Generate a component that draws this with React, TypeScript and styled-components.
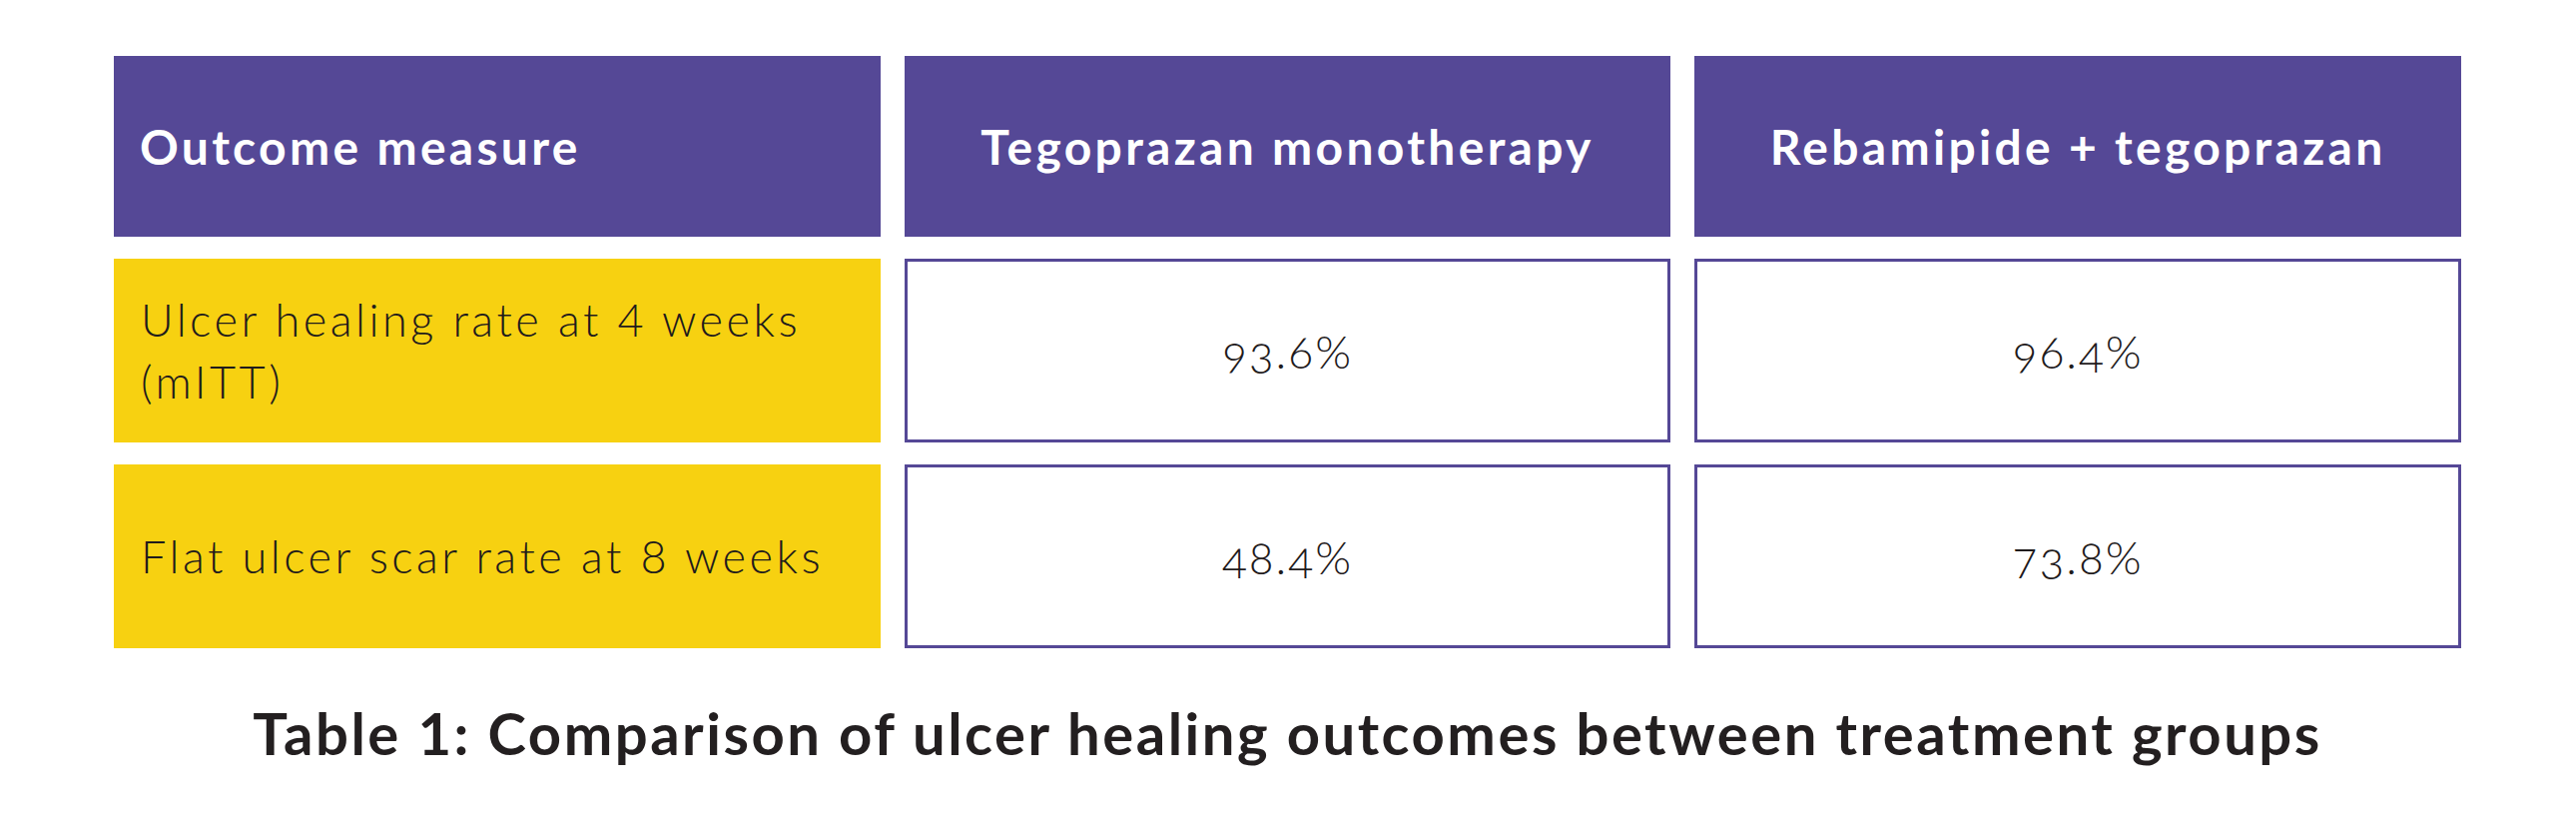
import styled, { createGlobalStyle } from 'styled-components';

const GlobalStyle = createGlobalStyle`
  html, body {
    margin: 0;
    padding: 0;
    background: #ffffff;
  }
  body {
    font-family: Lato, "Noto Sans", sans-serif;
    color: #231f20;
  }
`;

const rows = [
  { measure: 'Ulcer healing rate at 4 weeks (mITT)', mono: '93.6%', combo: '96.4%' },
  { measure: 'Flat ulcer scar rate at 8 weeks', mono: '48.4%', combo: '73.8%' },
];

function App() {
  return (
    <>
      <GlobalStyle />
      <Page>
        <Grid>
          <HeadCell>Outcome measure</HeadCell>
          <HeadCell $center>Tegoprazan monotherapy</HeadCell>
          <HeadCell $center>Rebamipide + tegoprazan</HeadCell>
          {rows.map((row) => (
            <Row key={row.measure}>
              <MeasureCell>{row.measure}</MeasureCell>
              <ValueCell>{row.mono}</ValueCell>
              <ValueCell>{row.combo}</ValueCell>
            </Row>
          ))}
        </Grid>
        <Caption>Table 1: Comparison of ulcer healing outcomes between treatment groups</Caption>
      </Page>
    </>
  );
}

export default App;

const Page = styled.div`
  box-sizing: border-box;
  width: 2580px;
  height: 830px;
  padding: 56px 115px 0 114px;
  display: flex;
  flex-direction: column;
  align-items: stretch;
`;

const Grid = styled.div`
  display: grid;
  grid-template-columns: repeat(3, 1fr);
  grid-template-rows: 181px 184px 184px;
  column-gap: 24px;
  row-gap: 22px;
`;

const Row = styled.div`
  display: contents;
`;

const HeadCell = styled.div<{ $center?: boolean }>`
  display: flex;
  align-items: center;
  justify-content: ${(p) => (p.$center ? 'center' : 'flex-start')};
  padding: 0 26px;
  background: #554896;
  color: #ffffff;
  font-size: 48px;
  font-weight: 700;
  letter-spacing: 3.3px;
`;

const MeasureCell = styled.div`
  display: flex;
  align-items: center;
  padding: 0 40px 0 27px;
  background: #f7d111;
  font-size: 45px;
  font-weight: 300;
  line-height: 62px;
  letter-spacing: 3.5px;
  color: #1f1b1c;
`;

const ValueCell = styled.div`
  box-sizing: border-box;
  display: flex;
  align-items: center;
  justify-content: center;
  border: 3.5px solid #554896;
  background: #ffffff;
  font-size: 46px;
  font-weight: 300;
  letter-spacing: 2px;
  font-variant-numeric: oldstyle-nums;
  color: #1f1b1c;
`;

const Caption = styled.div`
  margin-top: 50px;
  text-align: center;
  font-size: 58px;
  font-weight: 700;
  letter-spacing: 2.5px;
  color: #231f20;
`;
